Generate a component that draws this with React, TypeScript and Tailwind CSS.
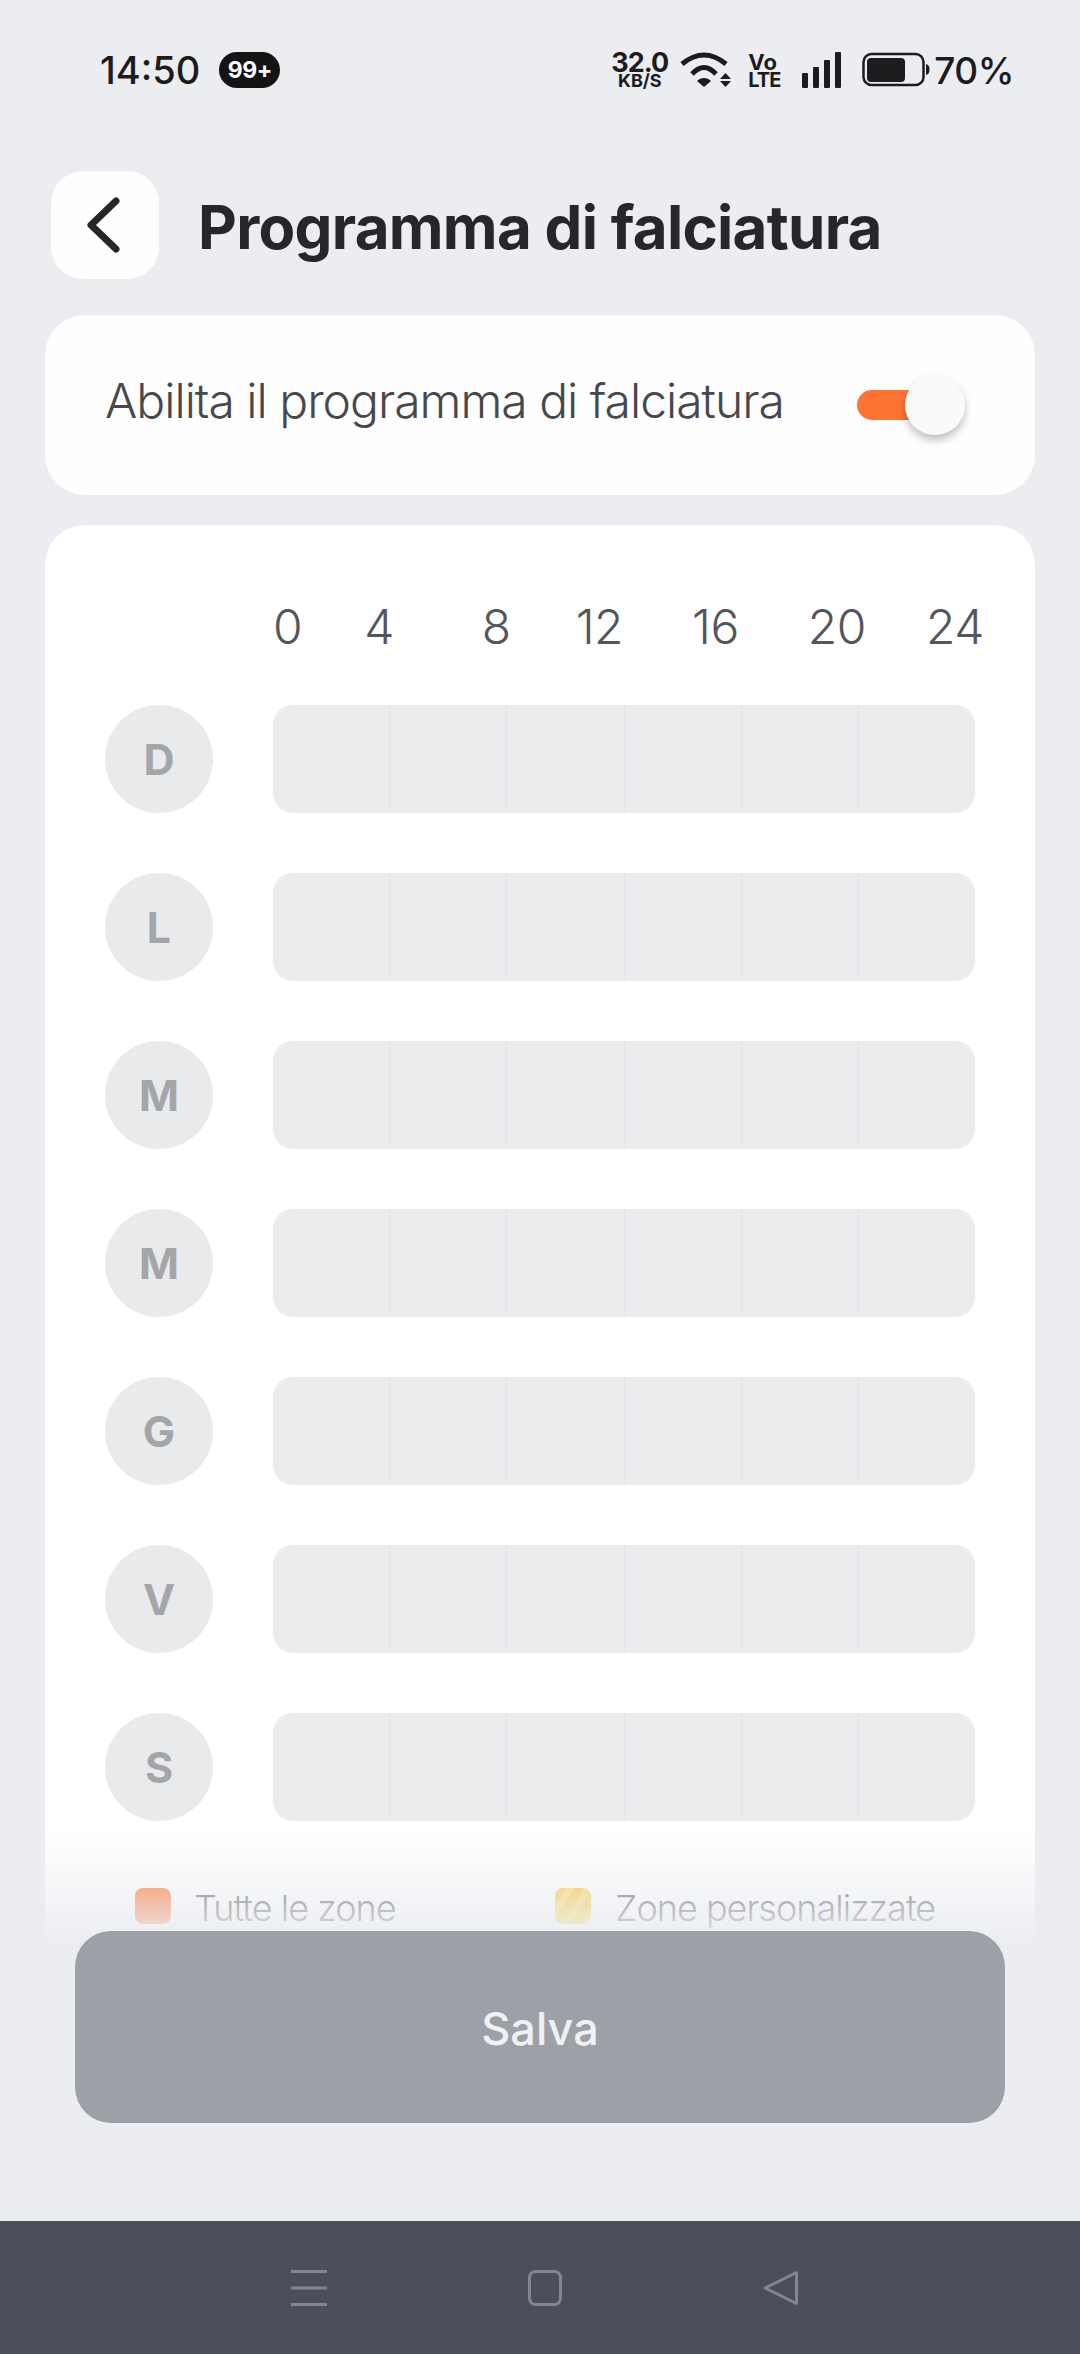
const DAYS = ["D", "L", "M", "M", "G", "V", "S"];

// Hour labels don't sit on the grid lines, each one carries its own offset
const HOURS = [
  { label: "0", className: "ml-[-1px]" },
  { label: "4", className: "ml-[62px]" },
  { label: "8", className: "ml-[88px]" },
  { label: "12", className: "ml-[65px]" },
  { label: "16", className: "ml-[69px]" },
  { label: "20", className: "ml-[69px]" },
  { label: "24", className: "ml-[60px]" },
];

function StatusBar() {
  return (
    <div className="flex h-[36px] items-center justify-between pl-[100px] pr-[66px] text-[#1c1c1e]">
      <div className="flex items-center gap-[19px]">
        <span className="text-[38px] font-medium leading-none">14:50</span>
        <span className="flex h-[36px] w-[61px] items-center justify-center rounded-full bg-[#141414] text-[23px] font-bold leading-none tracking-[-0.5px] text-white">
          99+
        </span>
      </div>
      <div className="flex items-center">
        <div className="flex w-[55px] flex-col items-center font-bold">
          <span className="text-[27px] leading-[21px] tracking-[-1px]">32.0</span>
          <span className="text-[18px] leading-[16px]">KB/S</span>
        </div>
        <svg className="ml-[13px]" width="52" height="36" viewBox="0 0 52 36" fill="none">
          <path d="M2 12Q24 -6 46 12" stroke="currentColor" strokeWidth="5" />
          <path d="M12 22Q24 9 36 22" stroke="currentColor" strokeWidth="5" />
          <path d="M17 29L24 35L31 29C27 25 21 25 17 29Z" fill="currentColor" />
          <path d="M40 27L45.5 21L51 27Z M40 29L45.5 35L51 29Z" fill="currentColor" />
        </svg>
        <div className="ml-[16px] flex w-[34px] flex-col items-start font-bold">
          <span className="text-[22px] leading-[20px]">Vo</span>
          <span className="text-[20px] leading-[16px] tracking-[-1px]">LTE</span>
        </div>
        <svg className="ml-[20px]" width="40" height="36" viewBox="0 0 40 36" fill="currentColor">
          <rect x="0" y="21" width="6" height="15" rx="1" />
          <rect x="11" y="15" width="6" height="21" rx="1" />
          <rect x="22" y="8" width="6" height="28" rx="1" />
          <rect x="33" y="0" width="6" height="36" rx="1" />
        </svg>
        <svg className="ml-[20px]" width="68" height="36" viewBox="0 0 68 36" fill="none">
          <rect x="1.5" y="2" width="60" height="31" rx="8" stroke="currentColor" strokeWidth="2.5" />
          <rect x="5" y="6" width="38" height="24" rx="4" fill="currentColor" />
          <path d="M64 12C66.5 12.5 67.5 14.5 67.5 17.5C67.5 20.5 66.5 22.5 64 23Z" fill="currentColor" />
        </svg>
        <span className="ml-[4px] text-[37px] font-medium leading-none tracking-[-0.5px]">70%</span>
      </div>
    </div>
  );
}

function Toggle() {
  return (
    <div className="relative h-[30px] w-[78px] rounded-full bg-[#ff7433]">
      <div className="absolute left-[48px] top-[-15px] h-[60px] w-[60px] rounded-full bg-[#fafafa] shadow-[0_5px_8px_rgba(0,0,0,0.25)]" />
    </div>
  );
}

function DayRow({ day }: { day: string }) {
  return (
    <div className="flex items-center gap-[60px]">
      <div className="flex h-[108px] w-[108px] items-center justify-center rounded-full bg-[#e9eaec] text-[43px] font-bold text-[#a3a5a9]">
        {day}
      </div>
      <div className="flex h-[108px] flex-1 overflow-hidden rounded-[20px] bg-[#ebecee]">
        {[0, 1, 2, 3, 4, 5].map((cell) => (
          <div key={cell} className="flex-1 border-r-[1.5px] border-[#e2e3e6] last:border-r-0" />
        ))}
      </div>
    </div>
  );
}

export default function App() {
  return (
    <div
      className="flex h-[2354px] w-[1080px] flex-col overflow-hidden bg-[#ebedf1] pt-[52px]"
      style={{ fontFamily: "Inter, 'Noto Sans', sans-serif" }}
    >
      <StatusBar />

      <div className="relative flex min-h-0 flex-1 flex-col">
        <div className="mt-[83px] flex items-center gap-[39px] pl-[51px]">
          <button className="flex h-[108px] w-[108px] items-center justify-center rounded-[32px] bg-[#fefefe]">
            <svg width="40" height="60" viewBox="0 0 40 60" fill="none">
              <path
                d="M31 6L6 30L31 54"
                stroke="#26272b"
                strokeWidth="7"
                strokeLinecap="round"
                strokeLinejoin="round"
              />
            </svg>
          </button>
          <h1 className="mt-[4px] text-[60px] font-bold leading-none tracking-[-0.7px] text-[#26272b]">
            Programma di falciatura
          </h1>
        </div>

        <div className="mx-[45px] mt-[36px] flex h-[180px] items-center justify-between rounded-[40px] bg-[#fefefe] pl-[60px] pr-[100px]">
          <span className="mb-[8px] text-[48px] font-light leading-none tracking-[-1px] text-[#47484c]">
            Abilita il programma di falciatura
          </span>
          <Toggle />
        </div>

        <div className="mx-[45px] mt-[30px] flex-1 rounded-t-[40px] bg-white px-[60px] pt-[78px]">
          <div className="flex pl-[169px] text-[48px] font-light leading-none tracking-[-0.5px] text-[#55565a]">
            {HOURS.map((hour) => (
              <span key={hour.label} className={hour.className}>
                {hour.label}
              </span>
            ))}
          </div>

          <div className="mt-[54px] flex flex-col gap-[60px]">
            {DAYS.map((day, index) => (
              <DayRow key={index} day={day} />
            ))}
          </div>

          <div className="mt-[64px] flex text-[36px] font-light leading-none tracking-[-1px] text-[#55565a]">
            <div className="ml-[30px] flex w-[420px] items-center gap-[23px]">
              <div className="h-[36px] w-[36px] rounded-[8px] bg-[#ff6f28]" />
              <span className="mt-[5px]">Tutte le zone</span>
            </div>
            <div className="flex items-center gap-[24px]">
              <div className="h-[36px] w-[36px] rounded-[8px] bg-[repeating-linear-gradient(120deg,#ffc42a_0px,#ffc42a_9px,#ffd65c_9px,#ffd65c_16px)]" />
              <span className="mt-[5px]">Zone personalizzate</span>
            </div>
          </div>
        </div>

        {/* Save button stays pinned above the nav, the schedule fades out under it */}
        <div className="absolute bottom-0 left-0 right-0 bg-[linear-gradient(to_bottom,rgba(235,237,241,0)_0px,#ebedf1_115px)] px-[75px] pb-[98px] pt-[101px]">
          <button className="flex h-[192px] w-full items-center justify-center rounded-[36px] bg-[#9ca0a7] pt-[4px] text-[45px] font-medium text-[#f0f1f3]">
            Salva
          </button>
        </div>
      </div>

      <div className="flex h-[133px] items-center gap-[201px] bg-[#4a4f59] pl-[291px]">
        <svg width="36" height="36" viewBox="0 0 36 36" fill="#82868f">
          <rect x="0" y="0" width="36" height="3" />
          <rect x="0" y="16.5" width="36" height="3" />
          <rect x="0" y="33" width="36" height="3" />
        </svg>
        <svg width="34" height="36" viewBox="0 0 34 36" fill="none">
          <rect x="1.5" y="1.5" width="31" height="33" rx="6" stroke="#82868f" strokeWidth="3" />
        </svg>
        <svg width="36" height="36" viewBox="0 0 36 36" fill="none">
          <path
            d="M33.5 2.5V33.5L2 18Z"
            stroke="#82868f"
            strokeWidth="3"
            strokeLinejoin="round"
          />
        </svg>
      </div>
    </div>
  );
}
